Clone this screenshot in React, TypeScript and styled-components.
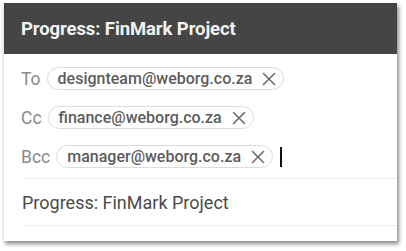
import React from "react";
import styled, { createGlobalStyle } from "styled-components";

const Global = createGlobalStyle`
  html, body { margin: 0; padding: 0; background: #ffffff; }
  body { font-family: Roboto, "Liberation Sans", Arial, sans-serif; }
`;

const Page = styled.div`
  padding: 3px 9px 0 3px;
  width: 406px;
  height: 251px;
  box-sizing: border-box;
`;

const Card = styled.div`
  width: 394px;
  height: 238px;
  background: #fff;
  border-left: 1px solid #e4e4e4;
  box-sizing: border-box;
  box-shadow: 2px 3px 4px rgba(0, 0, 0, 0.45);
  display: flex;
  flex-direction: column;
`;

const Header = styled.div`
  height: 51px;
  background: #454545;
  display: flex;
  align-items: center;
  padding-left: 17px;
  color: #f2f2f2;
  font-weight: 700;
  font-size: 18.5px;
  letter-spacing: -0.1px;
`;

const Recipients = styled.div`
  display: flex;
  flex-direction: column;
  padding: 5px 0 2px 17px;
`;

const Row = styled.div`
  height: 39px;
  display: flex;
  align-items: center;
  gap: 6px;
`;

const Label = styled.span`
  font-size: 17.5px;
  color: #8a8a8a;
`;

const Chip = styled.span`
  height: 23px;
  box-sizing: border-box;
  border: 1px solid #dcdcdc;
  border-radius: 12px;
  display: inline-flex;
  align-items: center;
  gap: 10px;
  padding: 0 7px 0 10px;
  font-size: 16px;
  font-weight: 500;
  color: #5c5c5c;
`;

const Cursor = styled.span`
  width: 2px;
  height: 20px;
  background: #111;
  margin-left: 1px;
`;

const Subject = styled.div`
  margin-left: 18px;
  height: 46px;
  border-top: 1px solid #ececec;
  border-bottom: 1px solid #ececec;
  display: flex;
  align-items: center;
  font-size: 18px;
  color: #4a4a4a;
`;

const Close = () => (
  <svg width="14" height="14" viewBox="0 0 14 14">
    <path d="M1.5 1.5L12.5 12.5M12.5 1.5L1.5 12.5" stroke="#6c6c6c" strokeWidth="1.6" strokeLinecap="round" />
  </svg>
);

const recipients: { label: string; email: string; cursor?: boolean }[] = [
  { label: "To", email: "designteam@weborg.co.za" },
  { label: "Cc", email: "finance@weborg.co.za" },
  { label: "Bcc", email: "manager@weborg.co.za", cursor: true },
];

export default function App() {
  return (
    <>
      <Global />
      <Page>
        <Card>
          <Header>Progress: FinMark Project</Header>
          <Recipients>
            {recipients.map((r) => (
              <Row key={r.label}>
                <Label>{r.label}</Label>
                <Chip>
                  {r.email}
                  <Close />
                </Chip>
                {r.cursor && <Cursor />}
              </Row>
            ))}
          </Recipients>
          <Subject>Progress: FinMark Project</Subject>
        </Card>
      </Page>
    </>
  );
}
